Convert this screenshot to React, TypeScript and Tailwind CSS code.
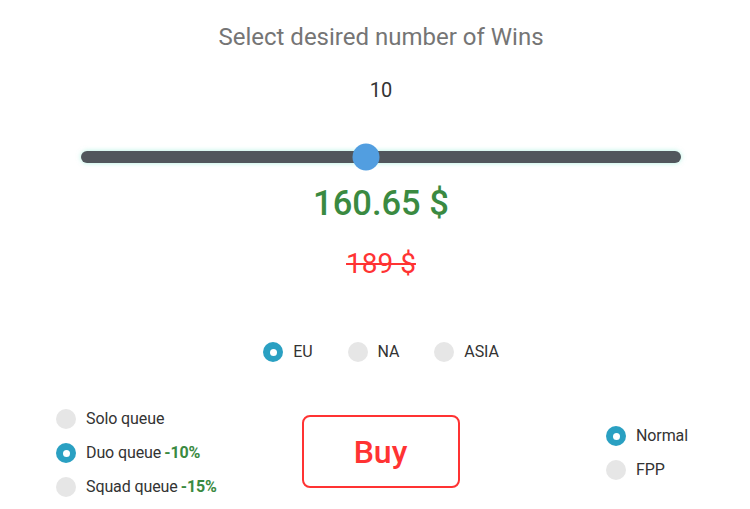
import { useState } from "react";

interface RadioProps {
  label: string;
  checked: boolean;
  onSelect: () => void;
  extra?: string;
}

function Radio({ label, checked, onSelect, extra }: RadioProps) {
  return (
    <button
      type="button"
      onClick={onSelect}
      className="flex items-center gap-[10px] text-[16px] leading-[20px] text-[#333333]"
    >
      {checked ? (
        <span className="flex h-[20px] w-[20px] items-center justify-center rounded-full bg-[#2aa0c2]">
          <span className="h-[7px] w-[7px] rounded-full bg-white" />
        </span>
      ) : (
        <span className="h-[20px] w-[20px] rounded-full bg-[#e6e6e6]" />
      )}
      <span className="tracking-[-0.1px]">
        {label}
        {extra && <span className="ml-[3px] font-bold text-[#3a8a41]">{extra}</span>}
      </span>
    </button>
  );
}

export default function App() {
  const [wins, setWins] = useState(10);
  const [region, setRegion] = useState("EU");
  const [queue, setQueue] = useState("duo");
  const [mode, setMode] = useState("normal");

  // thumb sits at 47.5% of the track for 10 wins
  const pct = 47.5;

  return (
    <div
      className="flex w-[762px] flex-col items-center bg-white"
      style={{ fontFamily: "Roboto, 'Noto Sans', sans-serif" }}
    >
      <div className="mt-[23px] text-[24px] leading-[28px] text-[#757575]">
        Select desired number of Wins
      </div>
      <div className="mt-[27px] text-[20px] leading-[24px] text-[#333333]">
        {wins}
      </div>

      <div
        className="relative mt-[49px] h-[12px] w-[600px] rounded-full bg-[#51565c] shadow-[0_0_5px_rgba(110,230,200,0.55)]"
        onClick={() => setWins(10)}
      >
        <div
          className="absolute top-1/2 h-[27px] w-[27px] -translate-x-1/2 -translate-y-1/2 rounded-full bg-[#529ee0]"
          style={{ left: `${pct}%` }}
        />
      </div>

      <div className="mt-[20px] text-[34.5px] font-medium leading-[40px] text-[#3a8a41]">
        160.65 $
      </div>
      <div className="mt-[25px] text-[28px] leading-[32px] text-[#ff3333] line-through">
        189 $
      </div>

      <div className="mt-[62px] flex justify-center gap-[35px]">
        {["EU", "NA", "ASIA"].map((r) => (
          <Radio
            key={r}
            label={r}
            checked={region === r}
            onSelect={() => setRegion(r)}
          />
        ))}
      </div>

      <div className="mt-[40px] grid w-full grid-cols-3 items-center">
        <div className="flex flex-col pl-[56px]">
          <div className="flex h-[34px] items-center">
            <Radio label="Solo queue" checked={queue === "solo"} onSelect={() => setQueue("solo")} />
          </div>
          <div className="flex h-[34px] items-center">
            <Radio label="Duo queue" extra="-10%" checked={queue === "duo"} onSelect={() => setQueue("duo")} />
          </div>
          <div className="flex h-[34px] items-center">
            <Radio label="Squad queue" extra="-15%" checked={queue === "squad"} onSelect={() => setQueue("squad")} />
          </div>
        </div>
        <div className="flex justify-center">
          <button className="ml-[-1px] mt-[-3px] flex h-[73px] w-[158px] items-center justify-center rounded-[8px] border-2 border-[#ff3333] text-[32px] font-medium text-[#ff3333]">
            Buy
          </button>
        </div>
        <div className="flex flex-col pl-[98px]">
          <div className="flex h-[34px] items-center">
            <Radio label="Normal" checked={mode === "normal"} onSelect={() => setMode("normal")} />
          </div>
          <div className="flex h-[34px] items-center">
            <Radio label="FPP" checked={mode === "fpp"} onSelect={() => setMode("fpp")} />
          </div>
        </div>
      </div>
    </div>
  );
}
